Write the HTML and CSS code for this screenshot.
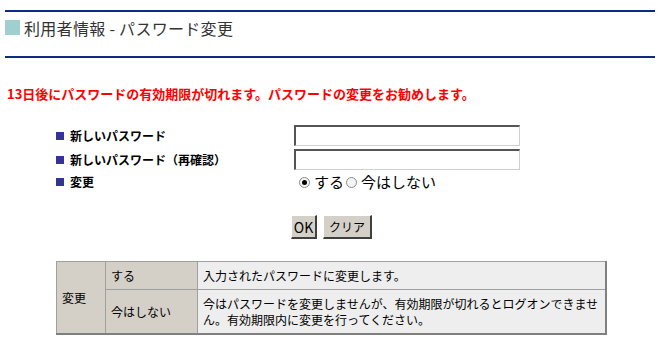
FILE: index.html
```html
<!DOCTYPE html>
<html lang="ja">
<head>
<meta charset="utf-8">
<title>利用者情報 - パスワード変更</title>
<link rel="stylesheet" href="styles.css">
</head>
<body>
<div class="header">
  <span class="header-mark"></span>
  <h1 class="header-title">利用者情報 - パスワード変更</h1>
</div>

<p class="notice">13日後にパスワードの有効期限が切れます。パスワードの変更をお勧めします。</p>

<form class="form">
  <div class="form-grid">
    <label class="form-label" for="pw1"><span class="bullet"></span>新しいパスワード</label>
    <input class="text-input" id="pw1" type="password">
    <label class="form-label" for="pw2"><span class="bullet"></span>新しいパスワード（再確認）</label>
    <input class="text-input" id="pw2" type="password">
    <span class="form-label"><span class="bullet"></span>変更</span>
    <div class="radio-group">
      <label class="radio-item"><input class="radio" type="radio" name="change" checked>する</label>
      <label class="radio-item"><input class="radio" type="radio" name="change">今はしない</label>
    </div>
  </div>
  <div class="buttons">
    <button class="btn btn-ok" type="button">OK</button>
    <button class="btn btn-clear" type="reset">クリア</button>
  </div>
</form>

<table class="help">
  <tr>
    <th class="help-key" rowspan="2">変更</th>
    <td class="help-opt">する</td>
    <td class="help-desc">入力されたパスワードに変更します。</td>
  </tr>
  <tr>
    <td class="help-opt">今はしない</td>
    <td class="help-desc">今はパスワードを変更しませんが、有効期限が切れるとログオンできませ<br>ん。有効期限内に変更を行ってください。</td>
  </tr>
</table>
</body>
</html>
```

FILE: styles.css
```css
html, body {
  margin: 0;
  padding: 0;
  background: #ffffff;
}

body {
  font-family: "Noto Sans CJK JP", "Noto Sans", sans-serif;
  color: #000;
}

.header {
  margin: 10px 8px 0 5px;
  border-top: 2px solid #0c2d7f;
  border-bottom: 2px solid #0c2d7f;
  height: 36px;
  padding-top: 8px;
  display: flex;
  align-items: flex-start;
  gap: 4px;
}

.header-mark {
  width: 15px;
  height: 15px;
  background: #9fcfcf;
  flex: none;
}

.header-title {
  margin: 0;
  font-size: 16px;
  font-weight: normal;
  color: #333;
  line-height: 16px;
  letter-spacing: 0.3px;
}

.notice {
  margin: 28px 0 0 7px;
  font-size: 13px;
  line-height: 16px;
  font-weight: bold;
  color: #ff0000;
}

.form {
  width: 551px;
  margin: 23px auto 0;
}

.form-grid {
  display: grid;
  grid-template-columns: 238px 1fr;
  row-gap: 3px;
  align-items: center;
}

.form-label {
  display: flex;
  align-items: center;
  gap: 6px;
  font-size: 12px;
  font-weight: bold;
  line-height: 16px;
}

.bullet {
  width: 8px;
  height: 8px;
  background: #333399;
  flex: none;
}

.text-input {
  box-sizing: border-box;
  width: 226px;
  height: 21px;
  margin: 0;
  padding: 0 2px;
  border-style: solid;
  border-width: 2px 1px 1px 2px;
  border-color: #555 #d0d0d0 #d0d0d0 #555;
  background: #fff;
  font-size: 13px;
}

.radio-group {
  display: flex;
  align-items: center;
  gap: 2px;
  padding-left: 5px;
  height: 18px;
}

.radio-item {
  display: flex;
  align-items: center;
  gap: 4px;
  font-size: 15px;
  line-height: 18px;
  color: #000;
}

.radio {
  appearance: none;
  -webkit-appearance: none;
  margin: 0;
  width: 11px;
  height: 11px;
  border: 1px solid #8a8a8a;
  border-radius: 50%;
  background: #f4f4f4;
  position: relative;
  box-sizing: border-box;
}

.radio:checked::after {
  content: "";
  position: absolute;
  left: 2px;
  top: 2px;
  width: 5px;
  height: 5px;
  border-radius: 50%;
  background: #000;
}

.buttons {
  display: flex;
  justify-content: center;
  gap: 6px;
  margin-top: 24px;
}

.btn {
  box-sizing: border-box;
  height: 24px;
  margin: 0;
  padding: 0 4px;
  background: #d4d0c8;
  border-style: solid;
  border-width: 1px 2px 2px 1px;
  border-color: #fff #404040 #404040 #fff;
  font-family: "Noto Sans CJK JP", sans-serif;
  color: #000;
  line-height: 20px;
}

.btn-ok {
  width: 26px;
  padding: 0;
  font-size: 14px;
}

.btn-clear {
  width: 49px;
  font-size: 12px;
}

.help {
  width: 551px;
  margin: 22px auto 0;
  border-collapse: collapse;
  border-top: 1px solid #a0a0a0;
  border-left: 1px solid #a0a0a0;
  border-right: 2px solid #808080;
  border-bottom: 2px solid #808080;
  font-size: 12px;
  line-height: 16px;
}

.help th,
.help td {
  border: 1px solid #a0a0a0;
  padding: 0 5px;
  text-align: left;
  font-weight: normal;
}

.help-key {
  width: 38px;
  background: #d4d0c8;
}

.help-opt {
  width: 81px;
  background: #d4d0c8;
}

.help-desc {
  background: #eeeeee;
}

.help tr:first-child td {
  height: 27px;
}

.help tr:last-child td {
  height: 43px;
}
```
